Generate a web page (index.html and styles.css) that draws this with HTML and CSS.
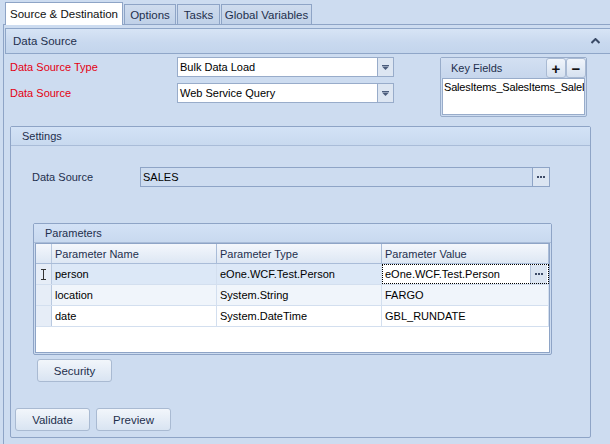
FILE: index.html
```html
<!DOCTYPE html>
<html>
<head>
<meta charset="utf-8">
<link rel="stylesheet" href="styles.css">
</head>
<body>
<div class="tabs">
  <div class="tab active">Source &amp; Destination</div>
  <div class="tab">Options</div>
  <div class="tab">Tasks</div>
  <div class="tab">Global Variables</div>
</div>
<div class="page">
  <div class="sect-head">
    <span class="sect-title">Data Source</span>
    <svg class="chev" width="9" height="6" viewBox="0 0 9 6"><path d="M0.5 5 L4.5 1 L8.5 5" fill="none" stroke="#3a4a66" stroke-width="2"/></svg>
  </div>
  <div class="ds">
    <div class="form">
      <div class="frow">
        <span class="lbl req">Data Source Type</span>
        <div class="combo"><span class="val">Bulk Data Load</span><span class="drop"><svg width="7" height="5" viewBox="0 0 7 5"><rect x="0" y="0" width="7" height="1" fill="#4c5d7c"/><path d="M0 1.5 H7 L3.5 5 Z" fill="#4c5d7c"/></svg></span></div>
      </div>
      <div class="frow">
        <span class="lbl req">Data Source</span>
        <div class="combo"><span class="val">Web Service Query</span><span class="drop"><svg width="7" height="5" viewBox="0 0 7 5"><rect x="0" y="0" width="7" height="1" fill="#4c5d7c"/><path d="M0 1.5 H7 L3.5 5 Z" fill="#4c5d7c"/></svg></span></div>
      </div>
    </div>
    <div class="keys">
      <div class="keys-head">
        <span class="keys-title">Key Fields</span>
        <span class="kbtn">+</span>
        <span class="kbtn">&minus;</span>
      </div>
      <div class="keys-list">SalesItems_SalesItems_SaleI</div>
    </div>
  </div>
  <div class="group settings">
    <div class="ghead">Settings</div>
    <div class="gbody">
      <div class="srow">
        <span class="slbl">Data Source</span>
        <div class="textbox"><span class="val">SALES</span><span class="ell"><i></i><i></i><i></i></span></div>
      </div>
      <div class="group params">
        <div class="ghead">Parameters</div>
        <div class="grid">
          <div class="gr head">
            <div class="c ind"></div>
            <div class="c">Parameter Name</div>
            <div class="c">Parameter Type</div>
            <div class="c last">Parameter Value</div>
          </div>
          <div class="gr sel">
            <div class="c ind"><svg width="7" height="11" viewBox="0 0 7 11"><path d="M1 0.5 H6 M3.5 0.5 V10.5 M1 10.5 H6" stroke="#333" stroke-width="1" fill="none"/></svg></div>
            <div class="c">person</div>
            <div class="c">eOne.WCF.Test.Person</div>
            <div class="c last edit"><span class="val">eOne.WCF.Test.Person</span><span class="ell small"><i></i><i></i><i></i></span></div>
          </div>
          <div class="gr alt">
            <div class="c ind"></div>
            <div class="c">location</div>
            <div class="c">System.String</div>
            <div class="c last">FARGO</div>
          </div>
          <div class="gr">
            <div class="c ind"></div>
            <div class="c">date</div>
            <div class="c">System.DateTime</div>
            <div class="c last">GBL_RUNDATE</div>
          </div>
        </div>
      </div>
      <button class="btn security">Security</button>
      <div class="actions">
        <button class="btn">Validate</button>
        <button class="btn">Preview</button>
      </div>
    </div>
  </div>
</div>
</body>
</html>
```

FILE: styles.css
```css
* { box-sizing: border-box; }
html, body { margin: 0; padding: 0; }
body {
  width: 610px;
  height: 444px;
  overflow: hidden;
  background: #cddcf0;
  font-family: "Liberation Sans", Arial, sans-serif;
  font-size: 11px;
  color: #000;
}
.tabs {
  height: 24px;
  display: flex;
  align-items: flex-end;
  gap: 1px;
  padding-left: 5px;
}
.tab {
  height: 20px;
  border: 1px solid #8ea4c6;
  border-bottom: none;
  background: linear-gradient(#cfdcee, #c0d1e8);
  color: #1e2f4d;
  font-size: 11.5px;
  white-space: nowrap;
  display: flex;
  align-items: center;
  justify-content: center;
}
.tab:nth-child(2) { width: 52px; }
.tab:nth-child(3) { width: 43px; }
.tab:nth-child(4) { width: 91px; }
.tab.active {
  width: 118px;
  height: 23px;
  background: #fff;
  position: relative;
  margin-bottom: -1px;
  z-index: 2;
  color: #111;
  padding-bottom: 1px;
}
.page {
  margin-left: 3px;
  width: 607px;
  height: 420px;
  border-left: 1px solid #8ea4c6;
  border-top: 1px solid #8ea4c6;
  position: relative;
  z-index: 1;
}
.sect-head {
  margin: 3px 0 0 1px;
  height: 26px;
  border: 1px solid #8fa6c8;
  border-right: none;
  background: linear-gradient(#d7e4f5 0%, #c9d9ef 55%, #c3d5ec 100%);
  display: flex;
  align-items: center;
  padding-left: 7px;
  padding-right: 10px;
  font-size: 11.5px;
  color: #1e2f4d;
}
.sect-title { flex: 1; }
.ds {
  display: flex;
  padding: 3px 0 0 6px;
}
.form {
  display: flex;
  flex-direction: column;
  gap: 6px;
}
.frow {
  display: flex;
  align-items: center;
  height: 20px;
}
.lbl {
  width: 167px;
}
.lbl.req { color: #e40012; }
.combo {
  width: 217px;
  height: 20px;
  background: #fff;
  border: 1px solid #98acca;
  display: flex;
  align-items: center;
}
.combo .val { flex: 1; padding-left: 2px; }
.combo .drop {
  width: 16px;
  height: 18px;
  border-left: 1px solid #98acca;
  background: #dde6f2;
  display: flex;
  align-items: center;
  justify-content: center;
}
.keys {
  margin-left: 46px;
  width: 147px;
  height: 60px;
  border: 1px solid #98acca;
  border-radius: 2px;
  display: flex;
  flex-direction: column;
  background: #cddcf0;
}
.keys-head {
  height: 20px;
  display: flex;
  align-items: stretch;
  background: linear-gradient(#d3e0f2, #c6d6ec);
}
.keys-title {
  flex: 1;
  display: flex;
  align-items: center;
  padding-left: 10px;
  color: #1e2f4d;
}
.kbtn {
  width: 20px;
  border: 1px solid #a9bad3;
  border-radius: 3px;
  background: linear-gradient(#f1f5fb, #d6e1f0);
  display: flex;
  align-items: center;
  justify-content: center;
  font-weight: bold;
  font-size: 15px;
  color: #111;
  line-height: 1;
}
.keys-list {
  flex: 1;
  margin: 0 1px 1px 1px;
  background: #fff;
  border: 1px solid #98acca;
  padding: 2px 0 0 1px;
  white-space: nowrap;
  overflow: hidden;
  letter-spacing: -0.2px;
}
.group {
  border: 1px solid #8ea4c6;
  border-radius: 2px;
}
.settings {
  margin: 9px 0 0 6px;
  width: 581px;
  height: 312px;
}
.ghead {
  height: 19px;
  border-bottom: 1px solid #a9bcd8;
  background: linear-gradient(#d3e2f6, #c8d9ef);
  display: flex;
  align-items: center;
  padding-left: 11px;
  color: #1e2f4d;
}
.gbody {
  display: flex;
  flex-direction: column;
  align-items: flex-start;
  padding-top: 21px;
}
.srow {
  display: flex;
  align-items: center;
  height: 20px;
  padding-left: 21px;
}
.slbl {
  width: 108px;
  color: #1e2f4d;
}
.textbox {
  width: 410px;
  height: 20px;
  border: 1px solid #8ea4c6;
  background: #cddcf0;
  display: flex;
  align-items: center;
}
.textbox .val { flex: 1; padding-left: 2px; }
.ell {
  width: 17px;
  height: 18px;
  border-left: 1px solid #8ea4c6;
  background: #dbe5f2;
  display: flex;
  align-items: center;
  justify-content: center;
  gap: 1px;
}
.ell i {
  display: block;
  width: 2px;
  height: 2px;
  background: #3e4c68;
}
.params {
  margin: 36px 0 0 22px;
  width: 519px;
  height: 132px;
}
.grid {
  margin: 0 1px;
  height: 110px;
  border: 1px solid #8ea4c6;
  background: #fff;
}
.gr {
  display: grid;
  grid-template-columns: 16px 165px 165px 1fr;
  height: 21px;
  border-bottom: 1px solid #d3dfef;
}
.gr.head {
  height: 20px;
  background: linear-gradient(#f4f7fc, #dde7f4);
  border-bottom: 1px solid #a9bcd8;
  color: #1e2f4d;
}
.c {
  border-right: 1px solid #d3dfef;
  display: flex;
  align-items: center;
  padding-left: 3px;
  white-space: nowrap;
  overflow: hidden;
}
.head .c { border-right-color: #a9bcd8; }
.c.ind {
  background: #e6edf7;
  border-right: 1px solid #b9c9e0;
  padding: 0;
  justify-content: center;
}
.head .c.ind { background: linear-gradient(#f4f7fc, #dde7f4); }
.gr.sel { background: #dce8f7; }
.gr.alt { background: #f0f5fb; }
.c.edit {
  background: #fff;
  outline: 1px dotted #000;
  outline-offset: -1px;
  padding-right: 1px;
}
.c.edit .val { flex: 1; }
.ell.small {
  width: 17px;
  height: 19px;
  border-left: 1px solid #b4c4dc;
}
.btn {
  width: 75px;
  height: 23px;
  border: 1px solid #a9bad2;
  border-radius: 3px;
  background: linear-gradient(#f2f6fb, #d9e4f2);
  font-family: "Liberation Sans", Arial, sans-serif;
  font-size: 11.5px;
  color: #1e2f4d;
  padding: 0;
}
.security {
  margin: 4px 0 0 26px;
}
.actions {
  display: flex;
  gap: 6px;
  margin: 26px 0 0 4px;
}
```
